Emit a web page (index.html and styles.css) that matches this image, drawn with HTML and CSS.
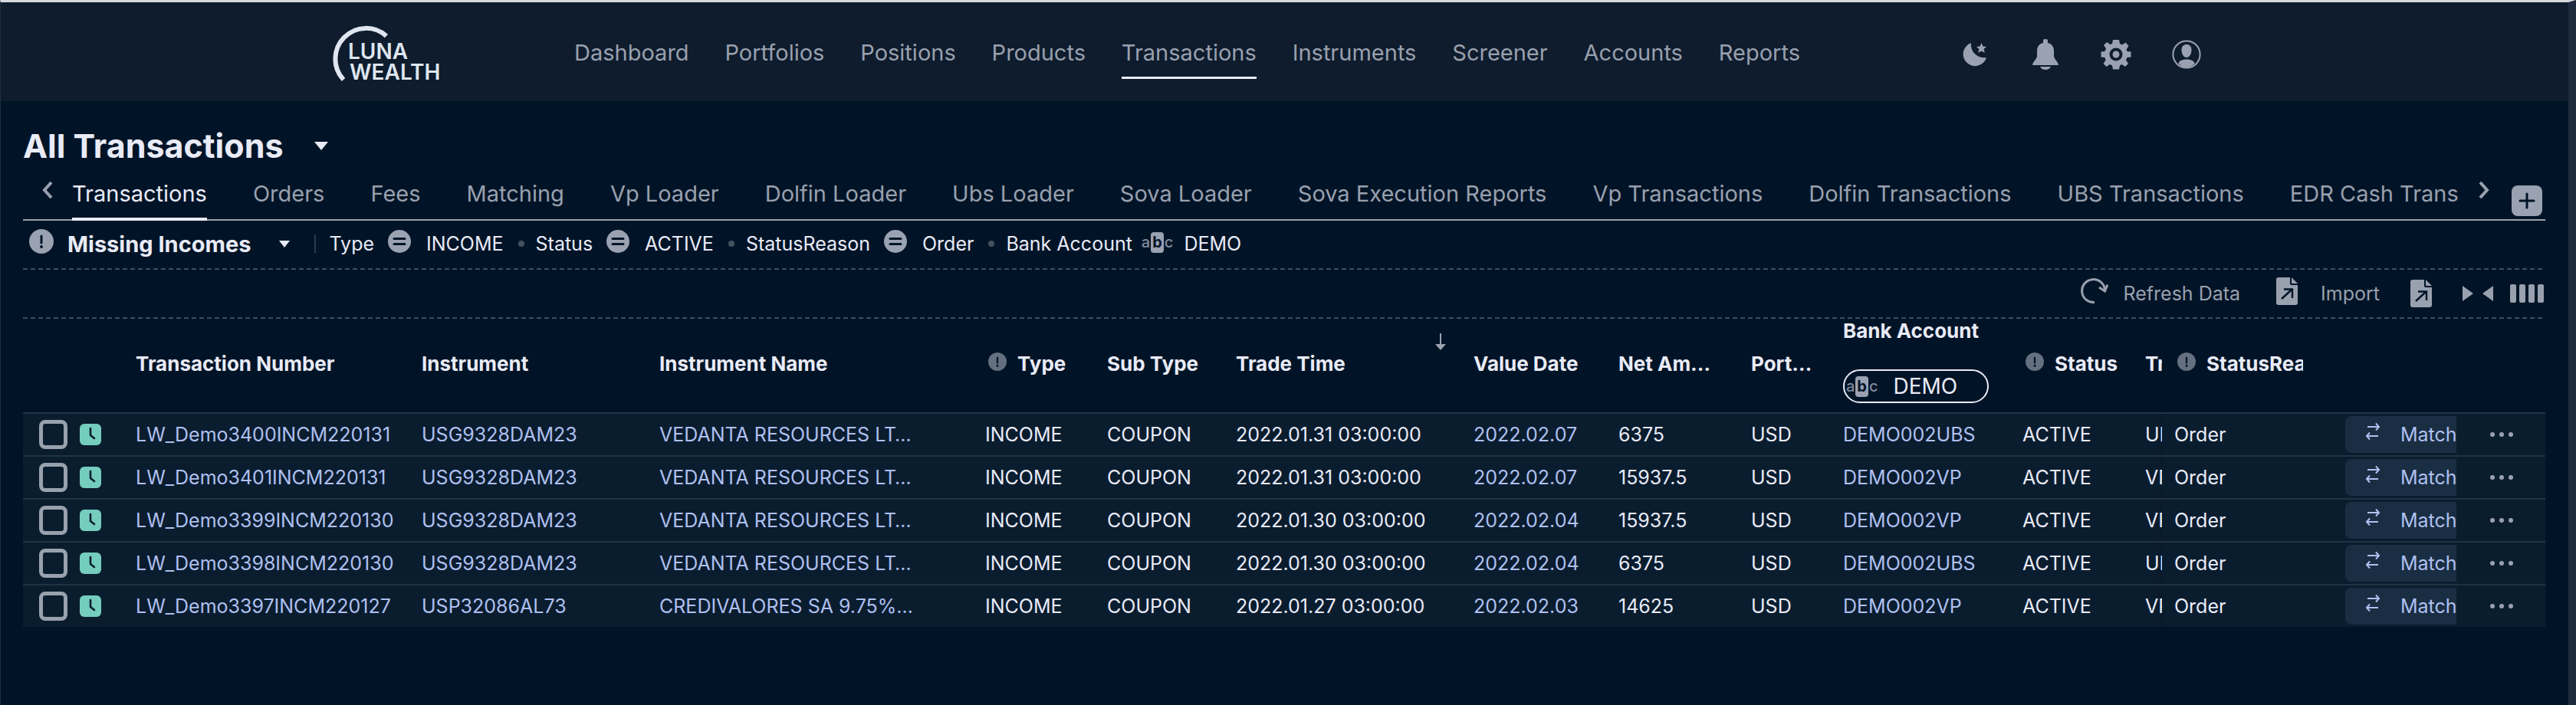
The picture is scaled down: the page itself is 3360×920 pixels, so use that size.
FILE: index.html
```
<!DOCTYPE html>
<html lang="en">
<head>
    <meta charset="UTF-8">
    <meta name="viewport" content="width=device-width, initial-scale=1.0">
    <title>Luna Wealth - All Transactions</title>
    <link rel="stylesheet" href="styles.css">
</head>
<body>

    <!-- Icon sprite -->
    <svg class="sprite" aria-hidden="true">
        <symbol id="i-info" viewBox="0 0 32 32">
            <circle cx="16" cy="16" r="16" fill="currentColor"/>
            <path d="M16 9v9" stroke="#011427" stroke-width="3" stroke-linecap="round"/>
            <circle cx="16" cy="23" r="2" fill="#011427"/>
        </symbol>
        <symbol id="i-equal" viewBox="0 0 30 30">
            <circle cx="15" cy="15" r="15" fill="currentColor"/>
            <path d="M8 11.5h14M8 18.5h14" stroke="#011427" stroke-width="3" stroke-linecap="round"/>
        </symbol>
        <symbol id="i-clock" viewBox="0 0 28 28">
            <rect width="28" height="28" rx="6" fill="#75cdbd"/>
            <path d="M14 6v9l5 4" fill="none" stroke="#0a1d2f" stroke-width="2.6" stroke-linecap="round" stroke-linejoin="round"/>
        </symbol>
        <symbol id="i-swap" viewBox="0 0 20 24">
            <path d="M3 6h15M14 1.500l4 4.500-4 4.500M17 18H2M6 13.500L2 18l4 4.500" fill="none" stroke="currentColor" stroke-width="2"/>
        </symbol>
        <symbol id="i-dots" viewBox="0 0 30 8">
            <circle cx="3" cy="4" r="3"/><circle cx="15" cy="4" r="3"/><circle cx="27" cy="4" r="3"/>
        </symbol>
        <symbol id="i-file" viewBox="0 0 28 36">
            <path d="M3 0h15v8a2 2 0 0 0 2 2h8v23a3 3 0 0 1-3 3H3a3 3 0 0 1-3-3V3a3 3 0 0 1 3-3zM20 0l8 8h-7a1 1 0 0 1-1-1z" fill="currentColor"/>
            <path d="M7 28L20 16M10 15.500h11V27" fill="none" stroke="#011427" stroke-width="2.400"/>
        </symbol>
    </svg>

    <!-- Header -->
    <header class="header">
        <a class="logo" href="#" aria-label="Luna Wealth">
            <svg width="148" height="80" viewBox="0 0 148 80">
                <path d="M70 19A40 40 0 0 0 14 76" fill="none" stroke="#dfe6ef" stroke-width="6"/>
                <text x="20" y="49">LUNA</text>
                <text x="22" y="76">WEALTH</text>
            </svg>
        </a>
        <nav class="nav-links">
            <a href="#">Dashboard</a>
            <a href="#">Portfolios</a>
            <a href="#">Positions</a>
            <a href="#">Products</a>
            <a href="#" class="active">Transactions</a>
            <a href="#">Instruments</a>
            <a href="#">Screener</a>
            <a href="#">Accounts</a>
            <a href="#">Reports</a>
        </nav>
        <div class="header-icons">
            <button type="button" aria-label="Dark mode">
                <svg width="40" height="40" viewBox="0 0 40 40">
                    <path d="M15 5a17 17 0 0 0 20 19A15.500 15.500 0 1 1 15 5z"/>
                    <path d="M28.500 5l2 4.500 4.500.4-3.400 3.200 1.200 4.900-4.300-2.500-4.300 2.500 1.200-4.900L22 9.900l4.500-.4z"/>
                </svg>
            </button>
            <button type="button" aria-label="Notifications">
                <svg width="40" height="40" viewBox="0 0 40 40">
                    <path d="M17 2q0-2 2-2h2q2 0 2 2v3c5 1 8 5 8 10v7c0 4 6 8 6 12H3c0-4 6-8 6-12v-7c0-5 3-9 8-10zM13 36h14c-1 2-3 4-7 4s-6-2-7-4z"/>
                </svg>
            </button>
            <button type="button" aria-label="Settings">
                <svg width="40" height="40" viewBox="0 0 40 40">
                    <path fill-rule="evenodd" d="M16 1h8l1 5 3 1.500 4.500-3 4 4.500-3 4.500L34.500 16l5 .5v7l-5 .5-1.500 3.500 3 4.500-4 4-4.500-3L25 34.500l-1 5h-8l-1-5-3-1.500-4.500 3-4-4 3-4.500L5.500 24l-5-.5v-7l5-.5L7 12.500 4 8l4-4 4.500 3L15 6zM20 11.500a8.500 8.500 0 1 0 0 17 8.500 8.500 0 0 0 0-17z"/>
                    <circle cx="20" cy="20" r="4.500"/>
                </svg>
            </button>
            <button type="button" aria-label="Profile">
                <svg width="40" height="40" viewBox="0 0 40 40">
                    <circle cx="20" cy="20" r="17.600" fill="none" stroke="currentColor" stroke-width="2"/>
                    <path d="M13.500 14c0-5 3-7 6.500-7s6.500 2 6.500 7c0 6-3 10-6.500 10s-6.500-4-6.500-10zM9.500 32c0-3 4-5.500 10.500-5.500S30.500 29 30.500 32c-2.500 3-6 5-10.500 5s-8-2-10.500-5z"/>
                </svg>
            </button>
        </div>
    </header>

    <main class="content">
        <h1><button type="button" class="view-switch">All Transactions <span class="caret"></span></button></h1>

        <!-- Tabs -->
        <div class="tab-bar">
            <button type="button" class="tab-arrow" aria-label="Previous tabs">
                <svg width="16" height="22" viewBox="0 0 16 22"><path d="M13 1L4 11l9 10" fill="none" stroke="currentColor" stroke-width="4"/></svg>
            </button>
            <nav class="tabs">
                <a href="#" class="active">Transactions</a>
                <a href="#">Orders</a>
                <a href="#">Fees</a>
                <a href="#">Matching</a>
                <a href="#">Vp Loader</a>
                <a href="#">Dolfin Loader</a>
                <a href="#">Ubs Loader</a>
                <a href="#">Sova Loader</a>
                <a href="#">Sova Execution Reports</a>
                <a href="#">Vp Transactions</a>
                <a href="#">Dolfin Transactions</a>
                <a href="#">UBS Transactions</a>
                <a href="#">EDR Cash Transactions</a>
            </nav>
            <button type="button" class="tab-arrow" aria-label="Next tabs">
                <svg width="16" height="22" viewBox="0 0 16 22"><path d="M3 1l9 10-9 10" fill="none" stroke="currentColor" stroke-width="4"/></svg>
            </button>
            <button type="button" class="add-tab" aria-label="Add tab">
                <svg width="40" height="40" viewBox="0 0 40 40"><path d="M20 11v18M11 20h18" stroke="#011427" stroke-width="3" stroke-linecap="round"/></svg>
            </button>
        </div>

        <!-- Active filter -->
        <div class="filter-bar">
            <svg class="info" width="32" height="32"><use href="#i-info"/></svg>
            <button type="button" class="filter-name">Missing Incomes <span class="caret small"></span></button>
            <ul class="filters">
                <li>Type <svg width="30" height="30"><use href="#i-equal"/></svg> <span>INCOME</span></li>
                <li>Status <svg width="30" height="30"><use href="#i-equal"/></svg> <span>ACTIVE</span></li>
                <li>StatusReason <svg width="30" height="30"><use href="#i-equal"/></svg> <span>Order</span></li>
                <li>Bank Account <span class="abc">a<b>b</b>c</span> <span>DEMO</span></li>
            </ul>
        </div>

        <!-- Toolbar -->
        <div class="toolbar">
            <button type="button" class="refresh">
                <svg width="36" height="36" viewBox="0 0 36 36"><path d="M18 32.500A15 15 0 1 1 31.500 16M24 13l7.500 5L35 9.500" fill="none" stroke="currentColor" stroke-width="3"/></svg>
                Refresh Data
            </button>
            <button type="button" class="import">
                <svg width="28" height="36"><use href="#i-file"/></svg>
                Import
            </button>
            <button type="button" aria-label="Export"><svg width="28" height="36"><use href="#i-file"/></svg></button>
            <button type="button" aria-label="Fit columns">
                <svg width="40" height="22" viewBox="0 0 40 22"><path d="M0 1l14 10L0 21zM40 1v20L26 11z" fill="currentColor"/></svg>
            </button>
            <button type="button" aria-label="Columns">
                <svg width="44" height="24" viewBox="0 0 44 24" fill="currentColor"><rect width="8" height="24" rx="2"/><rect x="12" width="8" height="24" rx="2"/><rect x="24" width="8" height="24" rx="2"/><rect x="36" width="8" height="24" rx="2"/></svg>
            </button>
        </div>

        <table class="grid">
            <colgroup>
                <col class="c-check"><col class="c-number"><col class="c-instrument"><col class="c-name">
                <col class="c-type"><col class="c-subtype"><col class="c-trade"><col class="c-value">
                <col class="c-net"><col class="c-port"><col class="c-bank"><col class="c-status">
                <col class="c-tr"><col class="c-reason"><col class="c-match"><col class="c-more">
            </colgroup>
            <thead>
                <tr>
                    <th></th>
                    <th>Transaction Number</th>
                    <th>Instrument</th>
                    <th>Instrument Name</th>
                    <th><div class="th-info"><svg width="24" height="24"><use href="#i-info"/></svg>Type</div></th>
                    <th>Sub Type</th>
                    <th><div class="th-sort">Trade Time
                        <svg width="14" height="22" viewBox="0 0 14 22"><path d="M7 0v16" stroke="currentColor" stroke-width="2"/><path d="M0 14h14l-7 8z" fill="currentColor"/></svg>
                    </div></th>
                    <th>Value Date</th>
                    <th>Net Am…</th>
                    <th>Port…</th>
                    <th>
                        <div class="th-search">
                            <label for="bank">Bank Account</label>
                            <div class="search-box"><span class="abc">a<b>b</b>c</span><input id="bank" type="text" value="DEMO"></div>
                        </div>
                    </th>
                    <th><div class="th-info"><svg width="24" height="24"><use href="#i-info"/></svg>Status</div></th>
                    <th>Tra</th>
                    <th><div class="th-info"><svg width="24" height="24"><use href="#i-info"/></svg>StatusReason</div></th>
                    <th></th>
                    <th></th>
                </tr>
            </thead>
            <tbody>
                <tr>
                    <td><div class="pick"><input type="checkbox" aria-label="Select LW_Demo3400INCM220131"><svg width="28" height="28"><use href="#i-clock"/></svg></div></td>
                    <td><a href="#">LW_Demo3400INCM220131</a></td>
                    <td><a href="#">USG9328DAM23</a></td>
                    <td><a href="#">VEDANTA RESOURCES LT…</a></td>
                    <td>INCOME</td>
                    <td>COUPON</td>
                    <td>2022.01.31 03:00:00</td>
                    <td><a href="#">2022.02.07</a></td>
                    <td>6375</td>
                    <td>USD</td>
                    <td><a href="#">DEMO002UBS</a></td>
                    <td>ACTIVE</td>
                    <td class="cut">UB</td>
                    <td>Order</td>
                    <td class="action"><button type="button" class="match"><svg width="20" height="24"><use href="#i-swap"/></svg>Match</button></td>
                    <td class="more"><button type="button" aria-label="More"><svg width="30" height="8"><use href="#i-dots"/></svg></button></td>
                </tr>
                <tr>
                    <td><div class="pick"><input type="checkbox" aria-label="Select LW_Demo3401INCM220131"><svg width="28" height="28"><use href="#i-clock"/></svg></div></td>
                    <td><a href="#">LW_Demo3401INCM220131</a></td>
                    <td><a href="#">USG9328DAM23</a></td>
                    <td><a href="#">VEDANTA RESOURCES LT…</a></td>
                    <td>INCOME</td>
                    <td>COUPON</td>
                    <td>2022.01.31 03:00:00</td>
                    <td><a href="#">2022.02.07</a></td>
                    <td>15937.5</td>
                    <td>USD</td>
                    <td><a href="#">DEMO002VP</a></td>
                    <td>ACTIVE</td>
                    <td class="cut">VP</td>
                    <td>Order</td>
                    <td class="action"><button type="button" class="match"><svg width="20" height="24"><use href="#i-swap"/></svg>Match</button></td>
                    <td class="more"><button type="button" aria-label="More"><svg width="30" height="8"><use href="#i-dots"/></svg></button></td>
                </tr>
                <tr>
                    <td><div class="pick"><input type="checkbox" aria-label="Select LW_Demo3399INCM220130"><svg width="28" height="28"><use href="#i-clock"/></svg></div></td>
                    <td><a href="#">LW_Demo3399INCM220130</a></td>
                    <td><a href="#">USG9328DAM23</a></td>
                    <td><a href="#">VEDANTA RESOURCES LT…</a></td>
                    <td>INCOME</td>
                    <td>COUPON</td>
                    <td>2022.01.30 03:00:00</td>
                    <td><a href="#">2022.02.04</a></td>
                    <td>15937.5</td>
                    <td>USD</td>
                    <td><a href="#">DEMO002VP</a></td>
                    <td>ACTIVE</td>
                    <td class="cut">VP</td>
                    <td>Order</td>
                    <td class="action"><button type="button" class="match"><svg width="20" height="24"><use href="#i-swap"/></svg>Match</button></td>
                    <td class="more"><button type="button" aria-label="More"><svg width="30" height="8"><use href="#i-dots"/></svg></button></td>
                </tr>
                <tr>
                    <td><div class="pick"><input type="checkbox" aria-label="Select LW_Demo3398INCM220130"><svg width="28" height="28"><use href="#i-clock"/></svg></div></td>
                    <td><a href="#">LW_Demo3398INCM220130</a></td>
                    <td><a href="#">USG9328DAM23</a></td>
                    <td><a href="#">VEDANTA RESOURCES LT…</a></td>
                    <td>INCOME</td>
                    <td>COUPON</td>
                    <td>2022.01.30 03:00:00</td>
                    <td><a href="#">2022.02.04</a></td>
                    <td>6375</td>
                    <td>USD</td>
                    <td><a href="#">DEMO002UBS</a></td>
                    <td>ACTIVE</td>
                    <td class="cut">UB</td>
                    <td>Order</td>
                    <td class="action"><button type="button" class="match"><svg width="20" height="24"><use href="#i-swap"/></svg>Match</button></td>
                    <td class="more"><button type="button" aria-label="More"><svg width="30" height="8"><use href="#i-dots"/></svg></button></td>
                </tr>
                <tr>
                    <td><div class="pick"><input type="checkbox" aria-label="Select LW_Demo3397INCM220127"><svg width="28" height="28"><use href="#i-clock"/></svg></div></td>
                    <td><a href="#">LW_Demo3397INCM220127</a></td>
                    <td><a href="#">USP32086AL73</a></td>
                    <td><a href="#">CREDIVALORES SA 9.75%…</a></td>
                    <td>INCOME</td>
                    <td>COUPON</td>
                    <td>2022.01.27 03:00:00</td>
                    <td><a href="#">2022.02.03</a></td>
                    <td>14625</td>
                    <td>USD</td>
                    <td><a href="#">DEMO002VP</a></td>
                    <td>ACTIVE</td>
                    <td class="cut">VP</td>
                    <td>Order</td>
                    <td class="action"><button type="button" class="match"><svg width="20" height="24"><use href="#i-swap"/></svg>Match</button></td>
                    <td class="more"><button type="button" aria-label="More"><svg width="30" height="8"><use href="#i-dots"/></svg></button></td>
                </tr>
            </tbody>
        </table>
    </main>

</body>
</html>
```

FILE: styles.css
```
* {
    box-sizing: border-box;
}

body {
    font-family: Inter, "Liberation Sans", sans-serif;
    font-size: 25px;
    margin: 0;
    min-height: 100vh;
    background-color: #011427;
    color: #e9ebf7;
    border-top: 3px solid #d5d9de;
    border-left: 1px solid #1d2f41;
    border-right: 10px solid #1e2b3f;
}

a {
    color: inherit;
    text-decoration: none;
}

button {
    font: inherit;
    color: inherit;
    background: none;
    border: 0;
    padding: 0;
    cursor: pointer;
}

svg {
    display: block;
    flex: none;
}

.sprite {
    position: absolute;
    width: 0;
    height: 0;
}

/* Header */
.header {
    display: flex;
    align-items: center;
    height: 129px;
    padding: 0 478px 0 433px;
    background-color: #0e1c2d;
}

.logo text {
    font-size: 28px;
    font-weight: 600;
    fill: #dfe6ef;
}

.nav-links {
    flex: 1;
    display: flex;
    justify-content: space-between;
    margin-left: 167px;
    margin-right: 208px;
    font-size: 29px;
    line-height: 36px;
    color: #99a0ae;
}

.nav-links a {
    padding: 18px 0 13px;
    border-bottom: 3px solid transparent;
}

.nav-links .active {
    border-bottom-color: #e9ebf7;
}

.header-icons {
    display: flex;
    gap: 52px;
    padding-top: 7px;
    color: #9aa1b1;
    fill: currentColor;
}

/* Page */
.content {
    padding: 0 30px 0 29px;
}

h1 {
    margin: 0;
    padding: 34px 0 15px;
    font-size: 43px;
    line-height: 48px;
}

.view-switch {
    display: flex;
    align-items: center;
    gap: 40px;
    font-weight: 700;
}

.caret {
    border: 9px solid transparent;
    border-top: 11px solid #e9ebf7;
    border-bottom: 0;
}

.caret.small {
    border-width: 9px 7px 0;
}

/* Tabs */
.tab-bar {
    display: flex;
    align-items: flex-start;
    height: 59px;
    border-bottom: 2px solid #9aa1b1;
    color: #99a0ae;
}

.tab-arrow {
    padding: 8px 24px 0;
}

.tabs {
    flex: 1;
    display: flex;
    gap: 60px;
    height: 59px;
    overflow: hidden;
    white-space: nowrap;
    font-size: 29px;
    line-height: 36px;
}

.tabs a {
    padding-top: 6px;
}

.tabs .active {
    color: #e9ebf7;
    border-bottom: 4px solid #e9ebf7;
}

.add-tab {
    margin: 13px 4px 0 4px;
    border-radius: 8px;
    background-color: #9aa1b1;
}

/* Active filter */
.filter-bar {
    display: flex;
    align-items: center;
    height: 62px;
    padding-left: 8px;
    padding-bottom: 2px;
}

.filter-bar .info {
    margin: 0 18px 6px 0;
    color: #9aa1b1;
}

.filter-name {
    display: flex;
    align-items: center;
    gap: 36px;
    font-size: 29px;
    font-weight: 700;
}

.filters {
    display: flex;
    align-items: center;
    margin: 0 0 0 32px;
    padding: 0 0 0 18px;
    border-left: 2px solid #2b3b4c;
    list-style: none;
    font-size: 25px;
    line-height: 24px;
}

.filters li {
    display: flex;
    align-items: center;
}

.filters li + li::before {
    content: "";
    width: 8px;
    height: 8px;
    margin: 0 15px 0 19px;
    border-radius: 50%;
    background-color: #44525f;
}

.filters svg {
    margin: -6px 20px 0 18px;
    color: #9aa1b1;
}

.filters .abc {
    margin: -4px 14px 0 12px;
}

.abc {
    display: flex;
    align-items: center;
    gap: 1px;
    font-size: 20px;
    font-weight: 500;
    line-height: 27px;
    color: #838b9b;
}

.abc b {
    padding: 0 2px;
    border-radius: 4px;
    background-color: #9aa1b1;
    color: #011427;
}

/* Toolbar */
.toolbar {
    display: flex;
    align-items: center;
    justify-content: flex-end;
    height: 66px;
    padding-right: 2px;
    font-size: 25px;
    color: #99a0ae;
    background:
        repeating-linear-gradient(90deg, #3f4e5d 0 6px, transparent 6px 10px) top / 100% 2px no-repeat,
        repeating-linear-gradient(90deg, #3f4e5d 0 6px, transparent 6px 10px) bottom / 100% 2px no-repeat;
}

.toolbar button {
    display: flex;
    align-items: center;
    margin-left: 22px;
}

.toolbar .refresh {
    gap: 20px;
}

.toolbar .import {
    gap: 30px;
    margin: 0 18px 0 47px;
}

.toolbar .import + button {
    margin-right: 18px;
}

.refresh svg,
.import svg {
    margin-bottom: 6px;
}

/* Transactions table */
.grid {
    width: 100%;
    table-layout: fixed;
    border-collapse: separate;
    border-spacing: 0;
    white-space: nowrap;
}

.c-check { width: 131px; }
.c-number { width: 373px; }
.c-instrument { width: 310px; }
.c-type { width: 159px; }
.c-subtype { width: 168px; }
.c-trade { width: 310px; }
.c-value { width: 189px; }
.c-net { width: 173px; }
.c-port { width: 120px; }
.c-bank { width: 234px; }
.c-status { width: 160px; }
.c-tr { width: 38px; }
.c-reason { width: 184px; }
.c-match { width: 200px; }
.c-more { width: 116px; }

.grid th,
.grid td {
    padding: 0 0 0 16px;
    overflow: hidden;
    text-align: left;
    font-size: 25px;
}

.grid th {
    height: 122px;
    padding-bottom: 6px;
    font-weight: 700;
    font-size: 26px;
}

.grid td {
    height: 56px;
    border-top: 2px solid #213343;
    background-color: #0a1d2f;
}

.grid td a {
    color: #afc0f0;
}

.th-info {
    display: flex;
    align-items: center;
    gap: 14px;
    padding-left: 4px;
}

.th-info svg {
    margin-bottom: 4px;
    color: #646f80;
}

.th-sort {
    display: flex;
    align-items: center;
    justify-content: space-between;
    height: 32px;
    padding-right: 20px;
}

.th-sort svg {
    margin-bottom: 56px;
    color: #9aa1b1;
}

.th-search {
    display: flex;
    flex-direction: column;
    gap: 36px;
    line-height: 28px;
}

.search-box {
    display: flex;
    align-items: center;
    gap: 20px;
    width: 190px;
    height: 44px;
    margin-bottom: 4px;
    padding-left: 2px;
    border: 2px solid #e9ebf7;
    border-radius: 22px;
    font-weight: 400;
}

.search-box input {
    min-width: 0;
    flex: 1;
    padding: 0;
    border: 0;
    outline: 0;
    background: none;
    color: inherit;
    font: inherit;
    font-size: 28px;
}

.pick {
    display: flex;
    align-items: center;
    gap: 16px;
    padding-left: 5px;
}

.pick input {
    appearance: none;
    width: 37px;
    height: 38px;
    margin: 0;
    border: 5px solid #98a1ad;
    border-radius: 8px;
}

.grid .cut {
    background-image: linear-gradient(90deg, transparent 28px, rgba(0, 0, 0, 0.1));
}

.grid .action {
    padding-left: 55px;
}

.match {
    display: flex;
    align-items: center;
    gap: 26px;
    width: 172px;
    height: 48px;
    padding-left: 26px;
    border-radius: 8px;
    background-color: #1a2e43;
    color: #afc0f0;
}

.match svg {
    margin-bottom: 8px;
}

.grid .more {
    padding-left: 44px;
}

.more button {
    display: block;
    color: #9aa1b1;
    fill: currentColor;
}
```
